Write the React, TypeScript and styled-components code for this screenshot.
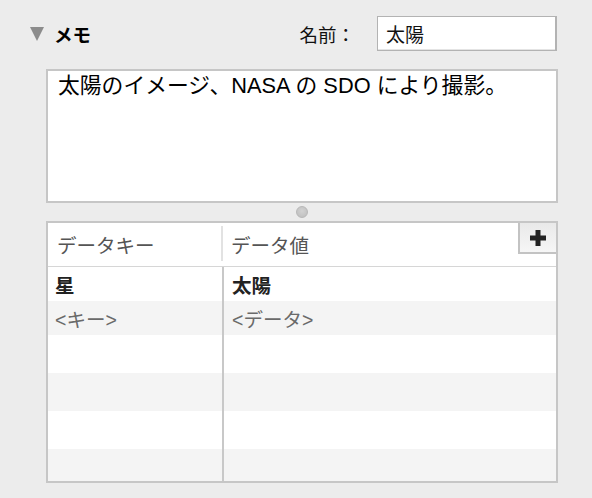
import React from 'react';
import styled, { createGlobalStyle } from 'styled-components';

interface Row {
  key: string;
  value: string;
  kind: 'data' | 'placeholder' | 'empty';
  height: number;
}

const rows: Row[] = [
  { key: '星', value: '太陽', kind: 'data', height: 34 },
  { key: '<キー>', value: '<データ>', kind: 'placeholder', height: 34 },
  { key: '', value: '', kind: 'empty', height: 38 },
  { key: '', value: '', kind: 'empty', height: 38 },
  { key: '', value: '', kind: 'empty', height: 38 },
  { key: '', value: '', kind: 'empty', height: 38 },
];

const GlobalStyle = createGlobalStyle`
  html, body {
    margin: 0;
    padding: 0;
    background: #ececec;
  }
  body {
    font-family: "Liberation Sans", "Noto Sans CJK JP", sans-serif;
    color: #111;
  }
`;

const Page = styled.div`
  width: 592px;
  height: 498px;
  padding-top: 16px;
  box-sizing: border-box;
  overflow: hidden;
`;

const Header = styled.div`
  display: flex;
  align-items: center;
  justify-content: space-between;
  padding: 0 35px 0 30px;
  height: 35px;
`;

const Disclosure = styled.div`
  display: flex;
  align-items: center;
  gap: 10px;
`;

const Triangle = styled.span`
  width: 0;
  height: 0;
  border-left: 7px solid transparent;
  border-right: 7px solid transparent;
  border-top: 14px solid #8c8c8c;
  margin-top: 1px;
`;

const Title = styled.span`
  font-size: 18.5px;
  font-weight: 700;
  color: #000;
`;

const NameField = styled.div`
  display: flex;
  align-items: center;
  gap: 22px;
`;

const Label = styled.span`
  font-size: 18.5px;
  color: #111;
`;

const NameInput = styled.div`
  width: 180px;
  height: 35px;
  box-sizing: border-box;
  border: 1px solid #b3b3b3;
  border-right-width: 2px;
  box-shadow: inset 0 -1px 0 #e4e4e4;
  background: #fff;
  padding: 0 8px;
  display: flex;
  align-items: center;
  font-size: 19px;
  color: #111;
`;

const Body = styled.div`
  margin: 18px 34px 0 46px;
  display: flex;
  flex-direction: column;
`;

const Memo = styled.div`
  height: 134px;
  box-sizing: border-box;
  border: 2px solid #c6c6c6;
  background: #fff;
  padding: 1px 10px;
  font-size: 21.8px;
  line-height: 27px;
  color: #000;
`;

const SplitRow = styled.div`
  height: 18px;
  display: flex;
  align-items: center;
  justify-content: center;
`;

const Handle = styled.span`
  width: 12px;
  height: 12px;
  border-radius: 50%;
  box-sizing: border-box;
  border: 1px solid #b8b8b8;
  background: radial-gradient(circle at 50% 40%, #d2d2d2, #bdbdbd);
`;

const Table = styled.div`
  position: relative;
  height: 262px;
  box-sizing: border-box;
  border: 2px solid #c6c6c6;
  background: #fff;
  overflow: hidden;
`;

const HeadRow = styled.div`
  display: flex;
  height: 43px;
  border-bottom: 1px solid #d6d6d6;
`;

const HeadCell = styled.div<{ $divider?: boolean }>`
  position: relative;
  display: flex;
  align-items: center;
  padding-left: 9px;
  font-size: 19.5px;
  color: #555;
  width: ${(p) => (p.$divider ? '165px' : 'auto')};
  flex: ${(p) => (p.$divider ? 'none' : '1')};
  &::after {
    content: ${(p) => (p.$divider ? "''" : 'none')};
    position: absolute;
    right: -1px;
    top: 3px;
    bottom: 5px;
    width: 2px;
    background: #e2e2e2;
  }
`;

const AddButton = styled.div`
  position: absolute;
  top: 0;
  right: 0;
  width: 38px;
  height: 31px;
  box-sizing: border-box;
  border-left: 2px solid #c3c3c3;
  border-bottom: 2px solid #c3c3c3;
  background: linear-gradient(#e9e9e9, #f6f6f6);
  display: flex;
  align-items: center;
  justify-content: center;
`;

const DataRow = styled.div<{ $height: number; $striped: boolean }>`
  display: flex;
  height: ${(p) => p.$height}px;
  background: ${(p) => (p.$striped ? '#f4f4f4' : '#fff')};
`;

const Cell = styled.div<{ $kind: Row['kind']; $first?: boolean }>`
  display: flex;
  align-items: center;
  box-sizing: border-box;
  padding-left: ${(p) => (p.$first ? '7px' : '8px')};
  width: ${(p) => (p.$first ? '176px' : 'auto')};
  flex: ${(p) => (p.$first ? 'none' : '1')};
  border-right: ${(p) => (p.$first ? '2px solid #c8c8c8' : 'none')};
  font-size: 19.5px;
  font-weight: ${(p) => (p.$kind === 'data' ? 700 : 400)};
  color: ${(p) => (p.$kind === 'placeholder' ? '#6a6a6a' : '#222')};
`;

function PlusIcon() {
  return (
    <svg width="16" height="16" viewBox="0 0 16 16">
      <rect x="0" y="5.5" width="16" height="5" fill="#222" />
      <rect x="5.5" y="0" width="5" height="16" fill="#222" />
    </svg>
  );
}

function App() {
  return (
    <Page>
      <GlobalStyle />
      <Header>
        <Disclosure>
          <Triangle />
          <Title>メモ</Title>
        </Disclosure>
        <NameField>
          <Label>名前：</Label>
          <NameInput>太陽</NameInput>
        </NameField>
      </Header>
      <Body>
        <Memo>太陽のイメージ、NASA の SDO により撮影。</Memo>
        <SplitRow>
          <Handle />
        </SplitRow>
        <Table>
          <HeadRow>
            <HeadCell $divider>データキー</HeadCell>
            <HeadCell>データ値</HeadCell>
          </HeadRow>
          <AddButton>
            <PlusIcon />
          </AddButton>
          {rows.map((row, i) => (
            <DataRow key={i} $height={row.height} $striped={i % 2 === 1}>
              <Cell $first $kind={row.kind}>{row.key}</Cell>
              <Cell $kind={row.kind}>{row.value}</Cell>
            </DataRow>
          ))}
        </Table>
      </Body>
    </Page>
  );
}

export default App;
